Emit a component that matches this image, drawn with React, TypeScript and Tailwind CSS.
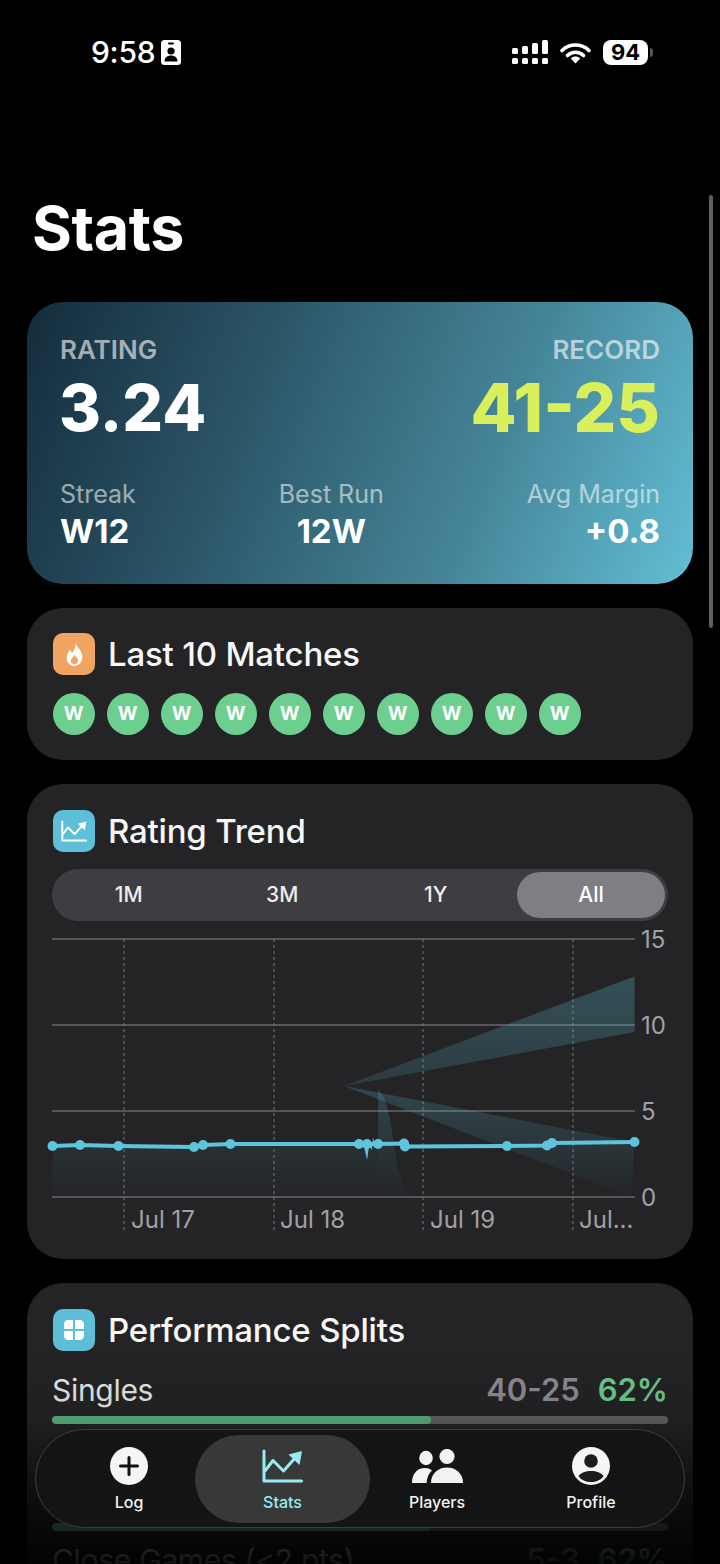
import { ReactNode } from "react";

const linePoints: [number, number][] = [
  [52.5, 1146],
  [80, 1145],
  [118.5, 1146],
  [194, 1147],
  [203, 1145],
  [230.5, 1144],
  [359, 1144],
  [367, 1144],
  [378, 1144],
  [404, 1143.5],
  [405, 1146.5],
  [507, 1146],
  [547, 1145.5],
  [552, 1143],
  [634.5, 1142],
];

const polyline = linePoints.map(([x, y]) => `${x},${y}`).join(" ");

function RatingChart() {
  return (
    <svg viewBox="52 930 616 310" className="mt-[9px] block h-[310px] w-[616px] overflow-visible">
      <defs>
        <linearGradient id="area" gradientUnits="userSpaceOnUse" x1="0" y1="960" x2="0" y2="1197">
          <stop offset="0" stopColor="#5ec1da" stopOpacity="0.3" />
          <stop offset="0.75" stopColor="#5ec1da" stopOpacity="0.09" />
          <stop offset="1" stopColor="#5ec1da" stopOpacity="0.01" />
        </linearGradient>
        <linearGradient id="areaLow" gradientUnits="userSpaceOnUse" x1="0" y1="1086" x2="0" y2="1197">
          <stop offset="0" stopColor="#5ec1da" stopOpacity="0.22" />
          <stop offset="1" stopColor="#5ec1da" stopOpacity="0.01" />
        </linearGradient>
      </defs>

      {/* grid */}
      {[939, 1025, 1111, 1197].map((y) => (
        <line key={y} x1="52" x2="635" y1={y} y2={y} stroke="#67676a" strokeWidth="1.4" />
      ))}
      {[124, 274, 423, 573].map((x) => (
        <line key={x} x1={x} x2={x} y1="939" y2="1231" stroke="#77777a" strokeWidth="1" strokeDasharray="3 3" />
      ))}

      {/* broken area fill */}
      <polygon points="344,1086 634.5,976.5 634.5,1032" fill="url(#area)" />
      <polygon points="344,1086 634,1142 632,1197" fill="url(#areaLow)" />
      <path d="M378 1090 C388 1096 392 1130 398 1170 L408 1197 L378 1197 Z" fill="url(#areaLow)" />
      <polygon points={`52.5,1197 ${polyline.split(" ").slice(0, 9).join(" ")} 378,1197`} fill="url(#area)" />

      {/* line */}
      <polyline points={polyline} fill="none" stroke="#5ec4dc" strokeWidth="4" strokeLinejoin="round" />
      {linePoints.map(([x, y]) => (
        <circle key={`${x}-${y}`} cx={x} cy={y} r="5" fill="#5ec4dc" />
      ))}
      <path d="M364 1146 L367 1160 L369 1146 L372 1150 L373 1137 L375 1146 Z" fill="#5ec4dc" />

      {/* axis labels */}
      <g fill="#a0a0a5" fontSize="24">
        <text x="131" y="1228">Jul 17</text>
        <text x="280" y="1228">Jul 18</text>
        <text x="430" y="1228">Jul 19</text>
        <text x="579" y="1228">Jul...</text>
        <text x="641" y="948">15</text>
        <text x="641" y="1034">10</text>
        <text x="641" y="1120">5</text>
        <text x="641" y="1206">0</text>
      </g>
    </svg>
  );
}

function CardTitle({ icon, bg, title }: { icon: ReactNode; bg: string; title: string }) {
  return (
    <div className="flex items-center gap-[13px] pl-[1px]">
      <div className={`flex h-[42px] w-[42px] items-center justify-center rounded-[10px] ${bg}`}>{icon}</div>
      <h2 className="text-[33px] leading-[42px] font-medium tracking-[-0.2px] text-[#f7f7f7]">{title}</h2>
    </div>
  );
}

function TrendIcon({ className }: { className: string }) {
  return (
    <svg viewBox="0 0 41 34" fill="none" className={className}>
      <path d="M2 2V32H39.5" stroke="currentColor" strokeWidth="3" strokeLinecap="round" strokeLinejoin="round" />
      <path d="M2.5 22.5L11 11.5L21.5 22L33 9" stroke="currentColor" strokeWidth="3" strokeLinejoin="round" />
      <path d="M26.5 5.5L40 2L37.5 16Z" fill="currentColor" />
    </svg>
  );
}

function Splits({ label, record, pct, fill }: { label: string; record: string; pct: string; fill?: string }) {
  return (
    <div className="flex items-center justify-between leading-[34px]">
      <span className="text-[30px] tracking-[-0.3px] text-[#ececec]">{label}</span>
      <span className="flex gap-[18px] text-[31px] font-semibold">
        <span className="text-[#8e8e93]">{record}</span>
        <span className={fill}>{pct}</span>
      </span>
    </div>
  );
}

function NavItem({ icon, label, active }: { icon: ReactNode; label: string; active?: boolean }) {
  return (
    <div
      className={`flex h-[88px] flex-1 flex-col items-center justify-end rounded-[44px] pb-[11px] ${
        active ? "bg-[#383838] text-[#97ecf3]" : "text-[#f2f2f2]"
      }`}
    >
      <div className="flex h-[38px] items-center justify-center">{icon}</div>
      <span className="mt-[7px] text-[16px] leading-[20px] font-medium">{label}</span>
    </div>
  );
}

export default function App() {
  return (
    <div className="relative h-[1564px] w-[720px] overflow-hidden bg-black font-[Inter,sans-serif] text-white">
      {/* status bar */}
      <div className="pt-[40px]">
        <div className="flex h-[25px] items-center justify-between pr-[67px] pl-[91px]">
          <div className="flex items-center gap-[6px]">
            <span className="text-[30px] leading-[25px] font-medium tracking-[-0.3px]">9:58</span>
            <svg viewBox="0 0 20 25" className="h-[25px] w-[20px]">
              <rect width="20" height="25" rx="3.5" fill="#fff" />
              <rect x="7" y="2.5" width="6" height="2" rx="1" fill="#000" />
              <circle cx="10" cy="11" r="3.6" fill="#000" />
              <path d="M3.5 21.5C3.5 17.5 6.5 15.5 10 15.5S16.5 17.5 16.5 21.5Z" fill="#000" />
            </svg>
          </div>
          <div className="flex items-center gap-[12px]">
            <svg viewBox="0 0 36 25" className="h-[25px] w-[36px]" fill="#fff">
              <rect x="0" y="8" width="6" height="6" rx="1.5" />
              <rect x="10" y="6" width="6" height="8" rx="1.5" />
              <rect x="20" y="3" width="6" height="11" rx="1.5" />
              <rect x="30" y="0" width="6" height="14" rx="1.5" />
              <rect x="0" y="18" width="6" height="6" rx="1.5" />
              <rect x="10" y="18" width="6" height="6" rx="1.5" />
              <rect x="20" y="18" width="6" height="6" rx="1.5" />
              <rect x="30" y="18" width="6" height="6" rx="1.5" />
            </svg>
            <svg viewBox="0 0 31 22" className="h-[22px] w-[31px]" fill="none">
              <path d="M2 8.5C9.5 1.2 21.5 1.2 29 8.5" stroke="#fff" strokeWidth="3.6" strokeLinecap="round" />
              <path d="M7.5 13.5C12 9.2 19 9.2 23.5 13.5" stroke="#fff" strokeWidth="3.6" strokeLinecap="round" />
              <path d="M10.8 16.4C13.5 14 17.5 14 20.2 16.4L15.5 21.5Z" fill="#fff" />
            </svg>
            <div className="flex items-center gap-[2px]">
              <div className="flex h-[25px] w-[45px] items-center justify-center rounded-[8px] bg-white text-[22px] font-bold text-black">
                94
              </div>
              <div className="h-[9px] w-[3px] rounded-r-full bg-[#555]" />
            </div>
          </div>
        </div>
      </div>

      {/* scroll indicator */}
      <div className="absolute top-[195px] right-[7px] h-[433px] w-[4px] rounded-full bg-[#5f5f5f]" />

      <main className="mt-[129px] px-[27px]">
        <h1 className="pl-[5px] text-[61px] leading-[68px] font-bold tracking-[-0.4px]">Stats</h1>

        {/* hero */}
        <section className="mt-[40px] rounded-[36px] bg-[linear-gradient(112deg,#142c3c_0%,#2b5567_33%,#468599_68%,#62bed4_100%)] px-[33px] pt-[33px] pb-[35px]">
          <div className="flex justify-between">
            <div>
              <p className="text-[26px] leading-[30px] font-semibold text-white/60">RATING</p>
              <p className="mt-[7px] -ml-[1px] text-[64px] leading-[72px] font-extrabold">3.24</p>
            </div>
            <div className="text-right">
              <p className="text-[26px] leading-[30px] font-semibold text-white/60">RECORD</p>
              <p className="mt-[7px] text-[67px] leading-[72px] font-extrabold text-[#d9f05c]">41-25</p>
            </div>
          </div>
          <div className="mt-[35px] flex justify-between">
            <div>
              <p className="text-[25px] leading-[30px] text-white/55">Streak</p>
              <p className="mt-[4px] text-[33px] leading-[36px] font-bold">W12</p>
            </div>
            <div className="text-center">
              <p className="text-[25px] leading-[30px] text-white/55">Best Run</p>
              <p className="mt-[4px] text-[33px] leading-[36px] font-bold">12W</p>
            </div>
            <div className="text-right">
              <p className="text-[25px] leading-[30px] text-white/55">Avg Margin</p>
              <p className="mt-[4px] text-[33px] leading-[36px] font-bold">+0.8</p>
            </div>
          </div>
        </section>

        {/* last 10 */}
        <section className="mt-[24px] rounded-[36px] bg-[#242426] px-[25px] pt-[25px] pb-[25px]">
          <CardTitle
            bg="bg-[#f0a461]"
            title="Last 10 Matches"
            icon={
              <svg viewBox="0 0 24 24" className="h-[25px] w-[25px]">
                <path
                  d="M13 1C14 5 19.5 8 19.5 14.5C19.5 19.5 16 23 12 23C8 23 4.5 19.8 4.5 15C4.5 11.5 6.5 9.5 7.5 7.5C8.5 9 9 10 10 10.5C11.5 8 13.5 5 13 1Z"
                  fill="#fff"
                />
                <path
                  d="M12.3 12C12.8 14 15.5 15.5 15.5 18C15.5 20 14 21.3 12 21.3C10 21.3 8.5 20 8.5 18C8.5 15.7 11.5 14.5 12.3 12Z"
                  fill="#f0a461"
                />
              </svg>
            }
          />
          <div className="mt-[18px] flex gap-[12px] pl-[1px]">
            {Array.from({ length: 10 }, (_, i) => (
              <div
                key={i}
                className="flex h-[42px] w-[42px] items-center justify-center rounded-full bg-[#6dcf8f] pr-[1px] text-[19px] font-bold"
              >
                W
              </div>
            ))}
          </div>
        </section>

        {/* rating trend */}
        <section className="mt-[24px] rounded-[36px] bg-[#242426] px-[25px] pt-[26px] pb-[19px]">
          <CardTitle
            bg="bg-[#5ebfd9]"
            title="Rating Trend"
            icon={<TrendIcon className="h-[24px] w-[26px] text-white" />}
          />
          <div className="mt-[17px] flex h-[52px] items-center rounded-[26px] bg-[#3e3e42] text-[21px] font-medium">
            <div className="w-[153.5px] text-center text-[#ededed]">1M</div>
            <div className="w-[153.5px] text-center text-[#ededed]">3M</div>
            <div className="w-[153.5px] text-center text-[#ededed]">1Y</div>
            <div className="ml-[4.5px] flex h-[46px] w-[148px] items-center justify-center rounded-[23px] bg-[#7e7e84]">
              All
            </div>
          </div>
          <RatingChart />
        </section>

        {/* splits */}
        <section className="mt-[24px] rounded-[36px] bg-[#242426] px-[25px] pt-[26px] pb-[40px]">
          <CardTitle
            bg="bg-[#5ebfd9]"
            title="Performance Splits"
            icon={
              <svg viewBox="0 0 22 22" className="h-[22px] w-[22px]" fill="#fff">
                <path d="M10 1V10H1V5C1 2.8 2.8 1 5 1Z" />
                <path d="M12 1H17C19.2 1 21 2.8 21 5V10H12Z" />
                <path d="M1 12H10V21H5C2.8 21 1 19.2 1 17Z" />
                <path d="M12 12H21V17C21 19.2 19.2 21 17 21H12Z" />
              </svg>
            }
          />
          <div className="mt-[22px]">
            <Splits label="Singles" record="40-25" pct="62%" fill="text-[#6dcf8f]" />
            <div className="mt-[9px] h-[8px] overflow-hidden rounded-full bg-[#636366]">
              <div className="h-full w-[61.5%] rounded-full bg-[#5cb37c]" />
            </div>
          </div>
          <div className="mt-[99px] h-[8px] overflow-hidden rounded-full bg-[#636366]">
            <div className="h-full w-[61.5%] rounded-full bg-[#5cb37c]" />
          </div>
          <div className="mt-[12px]">
            <Splits label="Close Games (<2 pts)" record="5-3" pct="62%" fill="text-[#6dcf8f]" />
          </div>
        </section>
      </main>

      {/* bottom fade under the tab bar */}
      <div className="pointer-events-none absolute inset-x-0 top-[1340px] h-[224px] bg-[linear-gradient(to_bottom,rgba(0,0,0,0)_0%,rgba(0,0,0,0.12)_35%,rgba(0,0,0,0.74)_80%,rgba(0,0,0,0.92)_100%)]" />

      {/* tab bar */}
      <nav className="absolute top-[1429px] left-[35px] flex h-[99px] w-[650px] items-center rounded-[50px] border border-[#3d3d3d] bg-[#141414]">
        <div className="flex w-[159px] justify-center pl-[27px]">
          <NavItem
            label="Log"
            icon={
              <svg viewBox="0 0 38 38" className="h-[38px] w-[38px]">
                <circle cx="19" cy="19" r="19" fill="#f5f5f5" />
                <path d="M19 10.5V27.5M10.5 19H27.5" stroke="#111" strokeWidth="3" strokeLinecap="round" />
              </svg>
            }
          />
        </div>
        <div className="w-[175px]">
          <NavItem active label="Stats" icon={<TrendIcon className="h-[34px] w-[41px]" />} />
        </div>
        <div className="flex w-[134px] justify-center">
          <NavItem
            label="Players"
            icon={
              <svg viewBox="0 0 51 34" className="h-[34px] w-[51px]" fill="#f2f2f2">
                <ellipse cx="14" cy="9" rx="6.8" ry="7.2" />
                <ellipse cx="35" cy="7.5" rx="7.6" ry="7.6" />
                <path d="M0 34C0 25 5 19 13 19C16 19 18 19.8 20 21.5C16.5 24.5 15 28.5 14.6 34Z" />
                <path d="M19 34C19 24.5 26 18.5 35 18.5C44 18.5 51 24.5 51 34Z" />
              </svg>
            }
          />
        </div>
        <div className="flex flex-1 justify-center pr-[6px]">
          <NavItem
            label="Profile"
            icon={
              <svg viewBox="0 0 38 38" className="h-[38px] w-[38px]">
                <circle cx="19" cy="19" r="19" fill="#f5f5f5" />
                <circle cx="19" cy="14" r="6.8" fill="#1c1c1c" />
                <path d="M6.5 29C9 25.5 13.5 24 19 24C24.5 24 29 25.5 31.5 29C29 33 24 35 19 35C14 35 9 33 6.5 29Z" fill="#1c1c1c" />
              </svg>
            }
          />
        </div>
      </nav>
    </div>
  );
}
